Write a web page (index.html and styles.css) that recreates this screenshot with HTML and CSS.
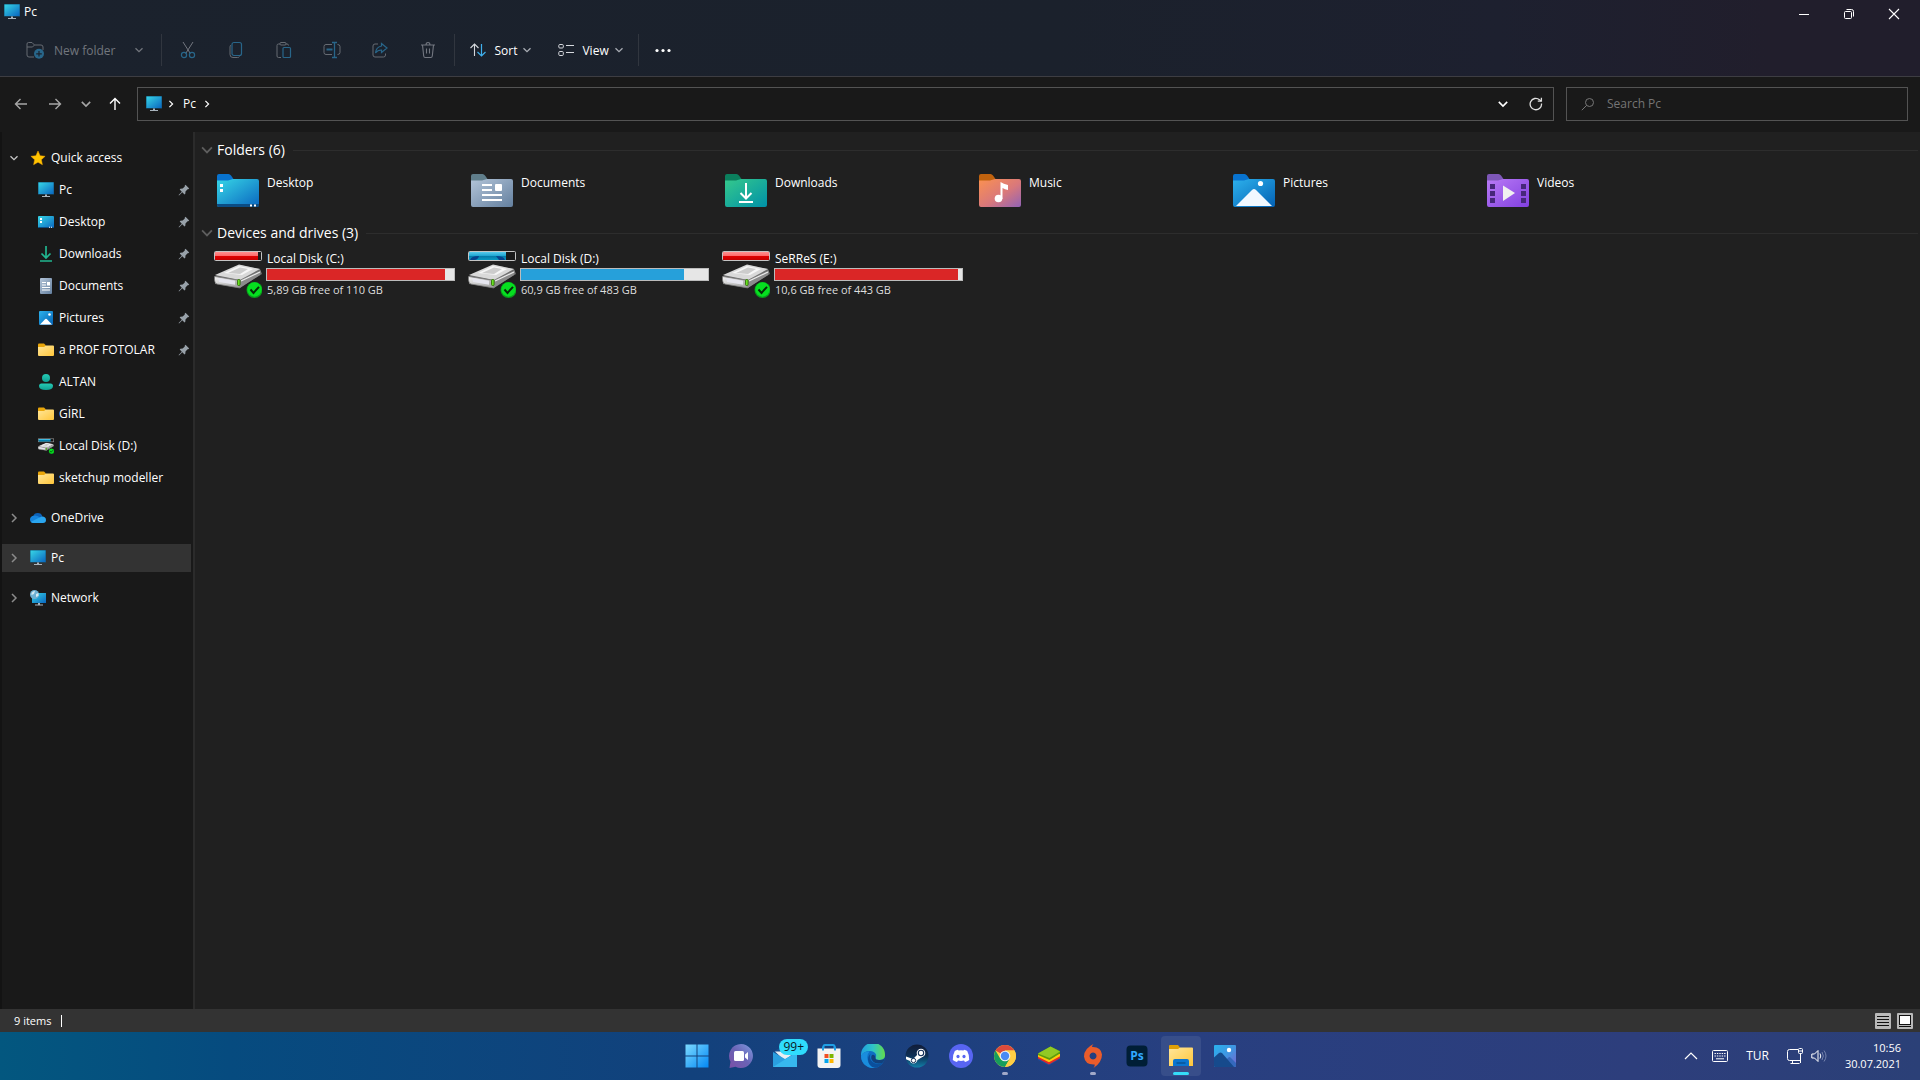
FILE: index.html
```html
<!DOCTYPE html>
<html lang="en">
<head>
    <meta charset="UTF-8">
    <meta name="viewport" content="width=device-width, initial-scale=1.0">
    <title>Pc</title>
    <link rel="stylesheet" href="styles.css">
</head>
<body>

    <!-- shared icons -->
    <svg class="sprite" aria-hidden="true">
        <defs>
            <linearGradient id="gScreen" x1="0" y1="0" x2="1" y2="1"><stop offset="0" stop-color="#37d6e6"/><stop offset="1" stop-color="#0a66c0"/></linearGradient>
            <linearGradient id="gFolder" x1="0" y1="0" x2="1" y2="1"><stop offset="0" stop-color="#ffe69a"/><stop offset="1" stop-color="#ffc63a"/></linearGradient>
            <linearGradient id="gDoc" x1="0" y1="0" x2="1" y2="1"><stop offset="0" stop-color="#b3c4d8"/><stop offset="1" stop-color="#64809f"/></linearGradient>
            <linearGradient id="gDown" x1="0" y1="0" x2="1" y2="1"><stop offset="0" stop-color="#35c98c"/><stop offset="1" stop-color="#0091a8"/></linearGradient>
            <linearGradient id="gMusic" x1="0" y1="0" x2="1" y2="1"><stop offset="0" stop-color="#fb9150"/><stop offset=".55" stop-color="#d9787b"/><stop offset="1" stop-color="#9162b6"/></linearGradient>
            <linearGradient id="gPic" x1="0" y1="0" x2="1" y2="1"><stop offset="0" stop-color="#2db1ec"/><stop offset="1" stop-color="#0361b4"/></linearGradient>
            <linearGradient id="gVid" x1="0" y1="0" x2="1" y2="1"><stop offset="0" stop-color="#b87af5"/><stop offset="1" stop-color="#8240e0"/></linearGradient>
            <linearGradient id="gUser" x1="0" y1="0" x2="0" y2="1"><stop offset="0" stop-color="#25cbb5"/><stop offset="1" stop-color="#109f92"/></linearGradient>
            <linearGradient id="gRed" x1="0" y1="0" x2="0" y2="1"><stop offset="0" stop-color="#ff8f8f"/><stop offset=".48" stop-color="#ff6a6a"/><stop offset=".5" stop-color="#e00000"/><stop offset="1" stop-color="#c40000"/></linearGradient>
            <linearGradient id="gCyan" x1="0" y1="0" x2="0" y2="1"><stop offset="0" stop-color="#58cbec"/><stop offset=".48" stop-color="#1fa5d2"/><stop offset=".5" stop-color="#0478a6"/><stop offset="1" stop-color="#0a9ac4"/></linearGradient>
            <linearGradient id="gMetal" x1="0" y1="0" x2="1" y2="1"><stop offset="0" stop-color="#f4f4f4"/><stop offset="1" stop-color="#9a9a9a"/></linearGradient>
            <linearGradient id="gWin" gradientUnits="userSpaceOnUse" x1="0" y1="0" x2="24" y2="24"><stop offset="0" stop-color="#7fdcff"/><stop offset="1" stop-color="#0086f4"/></linearGradient>
            <linearGradient id="gChat" x1="1" y1="0" x2="0" y2="1"><stop offset="0" stop-color="#7f9be0"/><stop offset=".5" stop-color="#6a63b5"/><stop offset="1" stop-color="#7c4fa6"/></linearGradient>
            <linearGradient id="gEdge" x1="0" y1="0" x2="1" y2="0"><stop offset="0" stop-color="#1f9fe0"/><stop offset=".5" stop-color="#2fc4c8"/><stop offset="1" stop-color="#62dc4b"/></linearGradient>
            <linearGradient id="gSteam" x1="0" y1="0" x2="0" y2="1"><stop offset="0" stop-color="#111c38"/><stop offset=".5" stop-color="#0d2f55"/><stop offset="1" stop-color="#127fa8"/></linearGradient>
            <linearGradient id="gPhoto" x1="0" y1="0" x2="1" y2="1"><stop offset="0" stop-color="#29b2ee"/><stop offset=".5" stop-color="#3f96e2"/><stop offset="1" stop-color="#7a63cf"/></linearGradient>
        </defs>

        <symbol id="pc" viewBox="0 0 16 16">
            <rect y="0" width="16" height="12.500" rx=".6" fill="#15577c"/>
            <rect x=".5" y=".5" width="15" height="11.500" fill="url(#gScreen)"/>
            <path d="M7 12.500h2v1.500h3v1H4v-1h3z" fill="#a9b4bd"/>
        </symbol>
        <symbol id="chev-down" viewBox="0 0 10 10"><path d="M1.500 3.200 5 6.700l3.500-3.500" fill="none" stroke="currentColor" stroke-width="1.300"/></symbol>
        <symbol id="chev-right" viewBox="0 0 10 10"><path d="M3 1l4 4-4 4" fill="none" stroke="currentColor" stroke-width="1.500"/></symbol>
        <symbol id="pin" viewBox="0 0 12 12"><path d="M7.500.8 11.200 4.500 10.200 5.300 9.600 5.200 7.500 7.400 7.300 9.700 6.500 10.400 4.300 8.200 1 11.400.6 11 3.800 7.700 1.700 5.600 2.400 4.800 4.700 4.600 6.800 2.500 6.700 1.700z" fill="#98a1a9"/></symbol>
        <symbol id="folder" viewBox="0 0 16 16">
            <path d="M0 2.500Q0 1.500 1 1.500H6L8 3.500V6H0z" fill="#e9a60a"/>
            <path d="M0 5h6l2-1.500h7q1 0 1 1V13q0 1-1 1H1q-1 0-1-1z" fill="url(#gFolder)"/>
        </symbol>
        <symbol id="star" viewBox="0 0 16 16"><path d="M8 1l2.100 4.700 5 .6-3.700 3.400 1 5L8 12.200 3.600 14.700l1-5L.9 6.300l5-.6z" fill="#ffc400" stroke="#f5a300" stroke-width=".5"/></symbol>

        <symbol id="drive" viewBox="0 0 48 34">
            <path d="M1 12 26 1 46 5 48 10 25 24 1 20z" fill="#6d6d6d"/>
            <path d="M1 11 25 .5 46 5 26 16z" fill="#d9d9d9"/>
            <path d="M10 9 25 2 39 5 28 11z" fill="#f6f6f6"/>
            <path d="M14 9 26 3.500 34 5 26 10z" fill="#cccccc"/>
            <path d="M.5 12.500 26 16.500V24L3 20Q.5 19 .5 16z" fill="url(#gMetal)" stroke="#777" stroke-width=".7"/>
            <path d="M26 16 47 6.500 46 11 26 24z" fill="#8b8b8b"/>
            <path d="M27 17 46 8" stroke="#ededed" stroke-width="1.200"/>
            <path d="M4 14l17 2.700v4L5 18z" fill="#e5e5ee"/>
            <rect x="23.500" y="15.500" width="2.600" height="6" rx="1" fill="#68e022" stroke="#286400" stroke-width=".8"/>
            <circle cx="40.500" cy="26" r="8" fill="#0a9a1c"/>
            <circle cx="40.500" cy="25.500" r="7.200" fill="#06df20"/>
            <path d="M36.500 25.500l3 3.400 5.500-6" fill="none" stroke="#052b08" stroke-width="2"/>
        </symbol>

        <!-- folder body shared by the six library folders -->
        <symbol id="fbody" viewBox="0 0 42 34">
            <path d="M0 6.500h11L16 5h24q2 0 2 2v24q0 2-2 2H2q-2 0-2-2z"/>
        </symbol>
    </svg>

    <div class="window">
        <header class="top">
            <div class="titlebar">
                <svg class="i16"><use href="#pc"/></svg>
                <span class="title">Pc</span>
                <div class="window-buttons">
                    <button type="button" aria-label="Minimize"><svg class="i12" viewBox="0 0 12 12"><path d="M1 6.500h10" stroke="#fff"/></svg></button>
                    <button type="button" aria-label="Restore"><svg class="i12" viewBox="0 0 12 12" fill="none" stroke="#fff"><rect x="1.500" y="3.500" width="7" height="7" rx="1"/><path d="M3.500 1.500H8.500q2 0 2 2V8.500"/></svg></button>
                    <button type="button" aria-label="Close"><svg class="i12" viewBox="0 0 12 12"><path d="M1 1l10 10M11 1 1 11" stroke="#fff" stroke-width="1.100"/></svg></button>
                </div>
            </div>

            <div class="toolbar">
                <button type="button" class="new-folder" disabled>
                    <svg class="i18" viewBox="0 0 18 18" fill="none"><path d="M8 16H3q-2 0-2-2V3q0-1.500 1.500-1.500H6L8.500 4H15q2 0 2 2v3M1 6h5.500l2-2" stroke="#666b73"/><circle cx="13" cy="12.800" r="5" fill="#28668a"/><path d="M13 10v5.600M10.200 12.800h5.600" stroke="#1b222d" stroke-width="1.200"/></svg>
                    <span>New folder</span>
                    <svg class="i10"><use href="#chev-down"/></svg>
                </button>
                <div class="group">
                    <button type="button" aria-label="Cut" disabled><svg class="i18" viewBox="0 0 18 18" fill="none"><path d="M4 1l7.300 11.500M14 1 6.700 12.500" stroke="#737780"/><circle cx="5" cy="14" r="2.600" stroke="#28668a" stroke-width="1.200"/><circle cx="13" cy="14" r="2.600" stroke="#28668a" stroke-width="1.200"/></svg></button>
                    <button type="button" aria-label="Copy" disabled><svg class="i18" viewBox="0 0 18 18" fill="none"><path d="M4 4q-1 .5-1 2v7.500q0 3 3 3h4.500q1.500 0 2-1" stroke="#666b73"/><rect x="5" y="1.500" width="9.500" height="13" rx="2" stroke="#28668a" stroke-width="1.200"/></svg></button>
                    <button type="button" aria-label="Paste" disabled><svg class="i18" viewBox="0 0 18 18" fill="none"><path d="M5 3H3.500Q2 3 2 4.500V15q0 1.500 1.500 1.500H6M10.500 3H12q1.500 0 1.500 1.500" stroke="#666b73"/><rect x="5" y="1.500" width="6" height="2.500" rx="1" stroke="#666b73"/><rect x="8" y="6.500" width="7.500" height="10" rx="1" stroke="#28668a" stroke-width="1.200"/></svg></button>
                    <button type="button" aria-label="Rename" disabled><svg class="i18" viewBox="0 0 18 18" fill="none"><path d="M9 3.500H3q-2 0-2 2v6q0 2 2 2h6M14.500 3.500q2.500 0 2.500 2v6q0 2-2.500 2" stroke="#666b73"/><path d="M3.500 8.500h6" stroke="#28668a" stroke-width="2"/><path d="M11.500 1.500v15M9 1.500h5M9 16.500h5" stroke="#28668a" stroke-width="1.300"/></svg></button>
                    <button type="button" aria-label="Share" disabled><svg class="i18" viewBox="0 0 18 18" fill="none"><path d="M7 3H4Q2 3 2 5v9q0 2 2 2h8.500q2 0 2-2v-1.500" stroke="#666b73"/><path d="M10.500 2.500 16 7l-5.500 4.500V9Q6.500 9 4.500 12 5 6 10.500 5z" stroke="#28668a" stroke-width="1.200"/></svg></button>
                    <button type="button" aria-label="Delete" disabled><svg class="i18" viewBox="0 0 18 18" fill="none"><path d="M2 4h14M3.500 4l1.200 11q.2 1.500 1.500 1.500h5.600q1.300 0 1.500-1.500L14.500 4M7 4q0-2.500 2-2.500T11 4M7.500 7.500v5M10.500 7.500v5" stroke="#737780" stroke-width="1.100"/></svg></button>
                </div>
                <div class="group menus">
                    <button type="button">
                        <svg class="i16" viewBox="0 0 16 16" fill="none"><path d="M4.500 14V2M.5 6l4-4 4 4" stroke="#d5d8dd" stroke-width="1.100"/><path d="M11.500 2v12M7.500 10l4 4 4-4" stroke="#3fb1ee" stroke-width="1.200"/></svg>
                        <span>Sort</span>
                        <svg class="i10"><use href="#chev-down"/></svg>
                    </button>
                    <button type="button">
                        <svg class="i16" viewBox="0 0 16 16" fill="none" stroke="#d5d8dd"><rect x=".8" y="2.500" width="4.500" height="3.500" rx="1"/><rect x=".8" y="9.500" width="4.500" height="4" rx="1"/><path d="M8 3.500h8M8 10.500h8"/></svg>
                        <span>View</span>
                        <svg class="i10"><use href="#chev-down"/></svg>
                    </button>
                </div>
                <button type="button" class="more" aria-label="See more"><svg class="i16" viewBox="0 0 16 16" fill="#fff"><circle cx="2" cy="8.500" r="1.600"/><circle cx="8" cy="8.500" r="1.600"/><circle cx="14" cy="8.500" r="1.600"/></svg></button>
            </div>
        </header>

        <div class="navbar">
            <div class="history">
                <button type="button" aria-label="Back"><svg class="i14" viewBox="0 0 14 14"><path d="M13 7H2M6.500 2 1.500 7l5 5" fill="none" stroke="#a6a6a6" stroke-width="1.400"/></svg></button>
                <button type="button" aria-label="Forward"><svg class="i14" viewBox="0 0 14 14"><path d="M1 7h11M7.500 2l5 5-5 5" fill="none" stroke="#a6a6a6" stroke-width="1.400"/></svg></button>
                <button type="button" class="recent" aria-label="Recent locations"><svg class="i12"><use href="#chev-down"/></svg></button>
                <button type="button" aria-label="Up"><svg class="i14" viewBox="0 0 14 14"><path d="M7 13V2M2 6.500l5-5 5 5" fill="none" stroke="#fff" stroke-width="1.400"/></svg></button>
            </div>
            <div class="address">
                <svg class="i16"><use href="#pc"/></svg>
                <svg class="i8"><use href="#chev-right"/></svg>
                <a href="#pc-root">Pc</a>
                <svg class="i8"><use href="#chev-right"/></svg>
                <button type="button" class="previous" aria-label="Previous locations"><svg class="i12"><use href="#chev-down"/></svg></button>
                <button type="button" aria-label="Refresh"><svg class="i14" viewBox="0 0 14 14" fill="none" stroke="#e0e0e0" stroke-width="1.300"><path d="M12.500 6.500A5.700 5.700 0 1 1 10.500 2.700L12.200 4"/><path d="M12.400.8V4.200H8.800"/></svg></button>
            </div>
            <label class="search">
                <svg class="i14" viewBox="0 0 14 14" fill="none" stroke="#777"><circle cx="8.500" cy="5.500" r="4"/><path d="M5.600 8.400.8 13.200"/></svg>
                <input type="text" placeholder="Search Pc" aria-label="Search Pc">
            </label>
        </div>

        <div class="main">
            <nav class="sidebar">
                <a href="#quick" class="root open"><svg class="i10"><use href="#chev-down"/></svg><svg class="i16"><use href="#star"/></svg>Quick access</a>
                <a href="#pc-root" class="child"><svg class="i16"><use href="#pc"/></svg>Pc<svg class="pin"><use href="#pin"/></svg></a>
                <a href="#desktop" class="child"><svg class="i16" viewBox="0 0 16 16"><rect y="2" width="16" height="12" rx="1" fill="url(#gScreen)"/><path d="M2 4h2v2H2zM2 7h2v2H2z" fill="#fff"/><path d="M0 13h16q0 1-1 1H1q-1 0-1-1z" fill="#0b4f86"/><path d="M11 12.800h1v1h-1zM13 12.800h1v1h-1z" fill="#fff"/></svg>Desktop<svg class="pin"><use href="#pin"/></svg></a>
                <a href="#downloads" class="child"><svg class="i16" viewBox="0 0 16 16"><path d="M8 0v11.500M3.500 7.500 8 12l4.500-4.500M2 15h12" fill="none" stroke="#21b58f" stroke-width="1.700"/></svg>Downloads<svg class="pin"><use href="#pin"/></svg></a>
                <a href="#documents" class="child"><svg class="i16" viewBox="0 0 16 16"><rect x="2" width="12" height="16" rx="1" fill="url(#gDoc)"/><path d="M4 4.500h4M4 7h4M4 9.500h8M4 12h8" stroke="#fff" stroke-width="1.100"/><path d="M9 4h3v3.500H9z" fill="#fff"/></svg>Documents<svg class="pin"><use href="#pin"/></svg></a>
                <a href="#pictures" class="child"><svg class="i16" viewBox="0 0 16 16"><rect x="1" y="1" width="14" height="14" rx="1" fill="url(#gPic)"/><path d="M2 14.500 7.300 9q.7-.7 1.400 0l5.300 5.500z" fill="#fff"/><circle cx="11.500" cy="4.500" r="1.300" fill="#fff"/></svg>Pictures<svg class="pin"><use href="#pin"/></svg></a>
                <a href="#prof" class="child"><svg class="i16"><use href="#folder"/></svg>a PROF FOTOLAR<svg class="pin"><use href="#pin"/></svg></a>
                <a href="#altan" class="child"><svg class="i16" viewBox="0 0 16 16" fill="url(#gUser)"><circle cx="8" cy="4" r="4"/><path d="M1 12q0-2.500 2.500-2.500h9Q15 9.500 15 12q0 4-7 4t-7-4z"/></svg>ALTAN</a>
                <a href="#girl" class="child"><svg class="i16"><use href="#folder"/></svg>GİRL</a>
                <a href="#disk-d" class="child"><svg class="i16" viewBox="0 0 16 16"><rect x=".3" y=".8" width="15.400" height="3" fill="#111" stroke="#999" stroke-width=".6"/><rect x=".6" y="1" width="12" height="2.500" fill="url(#gCyan)"/><svg y="4.500" width="16" height="11.500"><use href="#drive"/></svg></svg>Local Disk (D:)</a>
                <a href="#sketchup" class="child"><svg class="i16"><use href="#folder"/></svg>sketchup modeller</a>
                <a href="#onedrive" class="root"><svg class="i10"><use href="#chev-right"/></svg><svg class="i16" viewBox="0 0 16 16"><path d="M3 6.500A5 5 0 0 1 12.500 6.500L8 10z" fill="#0d62b8"/><path d="M4 5.700Q0 6 0 9.600 0 13 3.500 13L11 8.500Q7.500 5 4 5.700z" fill="#1684dc"/><path d="M12 6.500Q16 6.500 16 10q0 3-3 3H3.500Q1.500 13 1 11.800L9.500 7.500z" fill="#2aa5ee"/></svg>OneDrive</a>
                <a href="#pc-root" class="root selected"><svg class="i10"><use href="#chev-right"/></svg><svg class="i16"><use href="#pc"/></svg>Pc</a>
                <a href="#network" class="root"><svg class="i10"><use href="#chev-right"/></svg><svg class="i16" viewBox="0 0 16 16"><rect x="2" y="3" width="14" height="10" fill="url(#gScreen)"/><path d="M8 13h2v1.500h3v1H5v-1h3z" fill="#a9b4bd"/><circle cx="4.500" cy="4.500" r="4.500" fill="#6db0d3"/><path d="M1.500 3Q3 .8 5 1L4 4 1.500 5zM6 4l2.500-1v3L6 7z" fill="#d4e9f2"/></svg>Network</a>
            </nav>

            <main class="content" id="pc-root">
                <h2><svg class="i14"><use href="#chev-down"/></svg>Folders (6)</h2>
                <div class="tiles">
                    <a href="#desktop" class="tile">
                        <svg class="i48" viewBox="-3 -7 48 48"><path d="M0 2q0-2 2-2h9.500Q13 0 14 1.500L16.500 5V12H0z" fill="#0873cf"/><use href="#fbody" width="42" height="34" fill="url(#gScreen)"/><path d="M0 30h42v1q0 2-2 2H2q-2 0-2-2z" fill="#0b4c84"/><path d="M3 10h3v3H3zM3 15h3v3H3zM33 30.500h2v2h-2zM37 30.500h2v2h-2z" fill="#fff"/></svg>
                        <span class="name">Desktop</span>
                    </a>
                    <a href="#documents" class="tile">
                        <svg class="i48" viewBox="-3 -7 48 48"><path d="M0 2q0-2 2-2h9.500Q13 0 14 1.500L16.500 5V12H0z" fill="#607e8b"/><use href="#fbody" width="42" height="34" fill="url(#gDoc)"/><path d="M11 11h10M11 16h10M11 21h20M11 26h20" stroke="#fff" stroke-width="2"/><rect x="24" y="10" width="7" height="7" rx="1" fill="#fff"/></svg>
                        <span class="name">Documents</span>
                    </a>
                    <a href="#downloads" class="tile">
                        <svg class="i48" viewBox="-3 -7 48 48"><path d="M0 2q0-2 2-2h9.500Q13 0 14 1.500L16.500 5V12H0z" fill="#0b7f5d"/><use href="#fbody" width="42" height="34" fill="url(#gDown)"/><path d="M21 9v15M15.500 19l5.500 5.500 5.500-5.500M14 28h14" fill="none" stroke="#fff" stroke-width="2"/></svg>
                        <span class="name">Downloads</span>
                    </a>
                    <a href="#music" class="tile">
                        <svg class="i48" viewBox="-3 -7 48 48"><path d="M0 2q0-2 2-2h9.500Q13 0 14 1.500L16.500 5V12H0z" fill="#c0620e"/><use href="#fbody" width="42" height="34" fill="url(#gMusic)"/><circle cx="19.500" cy="24.500" r="3.800" fill="#fff"/><path d="M21.500 25V8q3 2 7.500 3v5q-3-.5-5.500-2v11z" fill="#fff"/></svg>
                        <span class="name">Music</span>
                    </a>
                    <a href="#pictures" class="tile">
                        <svg class="i48" viewBox="-3 -7 48 48"><path d="M0 2q0-2 2-2h9.500Q13 0 14 1.500L16.500 5V12H0z" fill="#0873cf"/><use href="#fbody" width="42" height="34" fill="url(#gPic)"/><path d="M3 32 19 16q2-2 4 0l16 16z" fill="#f1f8ff"/><circle cx="27.500" cy="9.500" r="2.600" fill="#fff"/></svg>
                        <span class="name">Pictures</span>
                    </a>
                    <a href="#videos" class="tile">
                        <svg class="i48" viewBox="-3 -7 48 48"><path d="M0 2q0-2 2-2h9.500Q13 0 14 1.500L16.500 5V12H0z" fill="#7e57b8"/><use href="#fbody" width="42" height="34" fill="url(#gVid)"/><path d="M3 10h5v5H3zM3 17h5v5H3zM3 24h5v5H3zM34 10h5v5h-5zM34 17h5v5h-5zM34 24h5v5h-5z" fill="#46277a"/><path d="M16 11.500 28 19 16 27z" fill="#f0f0f0"/></svg>
                        <span class="name">Videos</span>
                    </a>
                </div>

                <h2><svg class="i14"><use href="#chev-down"/></svg>Devices and drives (3)</h2>
                <div class="tiles">
                    <a href="#disk-c" class="tile drive">
                        <svg class="i48" viewBox="0 0 48 48"><rect x=".5" y="1.500" width="47" height="9" rx="1" fill="#1a1a1a" stroke="#c4c4c4"/><rect x="1" y="2" width="43" height="8" fill="url(#gRed)"/><svg y="14" width="48" height="34"><use href="#drive"/></svg></svg>
                        <span class="info">
                            <span class="label">Local Disk (C:)</span>
                            <span class="bar"><span class="used full" style="width: 95%"></span></span>
                            <span class="free">5,89 GB free of 110 GB</span>
                        </span>
                    </a>
                    <a href="#disk-d" class="tile drive">
                        <svg class="i48" viewBox="0 0 48 48"><rect x=".5" y="1.500" width="47" height="9" rx="1" fill="#1a1a1a" stroke="#c4c4c4"/><rect x="1" y="2" width="37" height="8" fill="url(#gCyan)"/><path d="M2 10q1-4 9-4-1 4-5 4zM28 6q8 0 9 4h-6z" fill="#06428c"/><svg y="14" width="48" height="34"><use href="#drive"/></svg></svg>
                        <span class="info">
                            <span class="label">Local Disk (D:)</span>
                            <span class="bar"><span class="used" style="width: 87%"></span></span>
                            <span class="free">60,9 GB free of 483 GB</span>
                        </span>
                    </a>
                    <a href="#disk-e" class="tile drive">
                        <svg class="i48" viewBox="0 0 48 48"><rect x=".5" y="1.500" width="47" height="9" rx="1" fill="#1a1a1a" stroke="#c4c4c4"/><rect x="1" y="2" width="46" height="8" fill="url(#gRed)"/><svg y="14" width="48" height="34"><use href="#drive"/></svg></svg>
                        <span class="info">
                            <span class="label">SeRReS (E:)</span>
                            <span class="bar"><span class="used full" style="width: 98%"></span></span>
                            <span class="free">10,6 GB free of 443 GB</span>
                        </span>
                    </a>
                </div>
            </main>
        </div>

        <footer class="statusbar">
            <span class="count">9 items</span>
            <div class="views">
                <button type="button" aria-label="Details"><svg class="i16" viewBox="0 0 16 16"><rect width="16" height="16" rx="1" fill="#b9b9b9"/><path d="M2 3.500h12M2 6.500h12M2 9.500h12M2 12.500h12" stroke="#111"/></svg></button>
                <button type="button" aria-label="Large icons"><svg class="i16" viewBox="0 0 16 16"><rect width="16" height="16" rx="1" fill="#b9b9b9"/><rect x="2.500" y="2.500" width="11" height="9" fill="#fff" stroke="#111"/><path d="M2 13.500h12" stroke="#111"/></svg></button>
            </div>
        </footer>
    </div>

    <div class="taskbar">
        <div class="apps">
            <button type="button" aria-label="Start"><svg class="i24" viewBox="0 0 24 24" fill="url(#gWin)"><path d="M.5.5h11v11H.5zM12.500.5h11v11h-11zM.5 12.500h11v11H.5zM12.500 12.500h11v11h-11z"/></svg></button>
            <button type="button" aria-label="Chat"><svg class="i24" viewBox="0 0 24 24"><path d="M12 0a12 12 0 1 1-5.500 22.700L.5 24l1-6.200A12 12 0 0 1 12 0z" fill="url(#gChat)"/><rect x="5" y="7" width="10" height="10" rx="1.500" fill="#fff"/><path d="M16 10.500 19 8v8l-3-2.500z" fill="#fff"/></svg></button>
            <button type="button" aria-label="Mail"><svg class="i24" viewBox="0 0 24 24"><path d="M0 8 8 3l16 5v8H0z" fill="#174f91"/><path d="M2 7.500h20L12 17z" fill="#e9eef3"/><path d="M0 8l12 7 12-7v15H0z" fill="#2a9fe0"/><path d="M0 23 24 8v15z" fill="#37b8ee"/></svg><span class="badge">99+</span></button>
            <button type="button" aria-label="Store"><svg class="i24" viewBox="0 0 24 24"><path d="M6.500 6V2.500q0-1.500 1.500-1.500h8q1.500 0 1.500 1.500V6" fill="none" stroke="#20a0e6" stroke-width="2"/><path d="M.5 4.500h23V21q0 3-3 3h-17q-3 0-3-3z" fill="#f3f3f3"/><path d="M6 2.500v4M18 2.500v4" stroke="#20a0e6" stroke-width="2"/><path d="M7.500 10h4v4h-4z" fill="#f04e23"/><path d="M12.500 10h4v4h-4z" fill="#7db500"/><path d="M7.500 15h4v4h-4z" fill="#05a5ec"/><path d="M12.500 15h4v4h-4z" fill="#ffb600"/></svg></button>
            <button type="button" aria-label="Edge"><svg class="i24" viewBox="0 0 24 24"><circle cx="12" cy="12" r="12" fill="#0f6fc4"/><path d="M0 11A12 12 0 0 1 24 10.500Q24.500 16 18 16q-4 0-3.500-2.500 1-1 .5-3Q13.500 7 9 7 2.500 7 0 12z" fill="url(#gEdge)"/><path d="M0 12Q2.500 7 8.500 7.500 4.500 12 7.500 18q2.500 5 7 5.700A12 12 0 0 1 0 12z" fill="#1a8ddd"/><path d="M9.500 10q-2 4.500 2 8 4.500 3.500 10.500.5-3.500 5-8 5.300-6.500-1-7-8Q7 11.500 9.500 10z" fill="#0b4f9c"/><path d="M14.500 13.500Q14 16 18 16q4.500.5 6-2.500-.5 3.500-2.300 5.300Q15 20.500 12 17.500q-3-3.500-1-6.500 3-1 3.500 2.500z" fill="#12417c"/></svg></button>
            <button type="button" aria-label="Steam"><svg class="i24" viewBox="0 0 24 24"><circle cx="12" cy="12" r="11.500" fill="url(#gSteam)"/><path d="M1 12.500 8 15l5-5 5 2.500-5.500 3.500Q11 20 8 19.500 5.500 19 5 17L1 15.200z" fill="#fff"/><circle cx="16" cy="9" r="4.300" fill="#fff"/><circle cx="16" cy="9" r="2.700" fill="#fff" stroke="#143058" stroke-width="1.100"/><circle cx="8.500" cy="16.500" r="2.200" fill="none" stroke="#143058"/></svg></button>
            <button type="button" aria-label="Discord"><svg class="i24" viewBox="0 0 24 24"><circle cx="12" cy="12" r="12" fill="#5865f2"/><path d="M9.500 6.500 9 5.800Q7 6.200 5.800 7 3.500 11 3.800 16q2 1.700 4.200 2l1-1.500q3 .8 6 0l1 1.500q2.200-.3 4.200-2 .3-5-2-9Q17 6.200 15 5.800l-.5.700q-2.500-.4-5 0z" fill="#fff"/><ellipse cx="9" cy="12.500" rx="1.600" ry="1.800" fill="#5865f2"/><ellipse cx="15" cy="12.500" rx="1.600" ry="1.800" fill="#5865f2"/></svg></button>
            <button type="button" class="running" aria-label="Chrome"><svg class="i24" viewBox="0 0 24 24"><circle cx="12" cy="12" r="11" fill="#ffce44"/><path d="M12 12 2.500 6.500A11 11 0 0 1 21.500 6.500H12z" fill="#db4a3c"/><path d="M2.500 6.500 7.300 14.700 12 12 16.700 14.800 12 23A11 11 0 0 1 2.500 6.500z" fill="#179d5b"/><path d="M21.500 6.500H12l4.800 8.200L12 23A11 11 0 0 0 21.500 6.500z" fill="#ffce44"/><circle cx="12" cy="12" r="5.300" fill="#f2f2f2"/><circle cx="12" cy="12" r="4.200" fill="#4a8af4"/></svg></button>
            <button type="button" aria-label="BlueStacks"><svg class="i24" viewBox="0 0 24 24"><path d="M1 14.500 12 9l11 5v1L12 21.500 1 16z" fill="#1b4d9e"/><path d="M1 12.500 12 8l11 4v2.200l-11 6.300L1 14.500z" fill="#e02a2a"/><path d="M1 10.500 12 6l11 4v2.200l-11 6-11-5.500z" fill="#ffcb0a"/><path d="M1 9.500 13.500 2.500 23 7v2.500L12.500 16 1 11z" fill="#5c9d0c"/><path d="M1 9.500 13.500 2.500 23 7.500 12.500 14z" fill="#92c924"/></svg></button>
            <button type="button" class="running" aria-label="Origin"><svg class="i24" viewBox="0 0 24 24"><path d="M12.500 0q-1.500 1.500-1.500 3Q20 2.500 21 10.500q0 8-8.500 13.500 1.500-2 1.200-3.500Q4 21 3 12.500 3 4.500 12.500 0zM12 8.500a3.500 3.500 0 1 0 .1 0z" fill="#ea5c2b" fill-rule="evenodd"/></svg></button>
            <button type="button" aria-label="Photoshop"><svg class="i24" viewBox="0 0 24 24"><rect x="1.500" y="1.500" width="21" height="21" rx="4" fill="#001e36"/><text x="12" y="16" class="ps">Ps</text></svg></button>
            <button type="button" class="running active" aria-label="File Explorer"><svg class="i24" viewBox="0 0 24 24"><path d="M0 2q0-1 1-1h8l2 2.500V6H0z" fill="#e0a008"/><path d="M0 5h9l2-1.500h12q1 0 1 1V22H0z" fill="url(#gFolder)"/><path d="M4 22v-5q0-2 2-2h12q2 0 2 2v5z" fill="#0b75cf"/><path d="M7.500 19h9" stroke="#0a5494" stroke-width="1.500"/></svg></button>
            <button type="button" aria-label="Photos"><svg class="i24" viewBox="0 0 24 24"><rect x="1" y="1" width="22" height="22" rx="1" fill="url(#gPhoto)"/><path d="M13 16l2.500-2.500q1-1 2 0L23 19v3q0 1-1 1h-9z" fill="#3569bd"/><path d="M1 13.500 6 9q1.500-1 3 0l12 14H2q-1 0-1-1z" fill="#164a8c"/><circle cx="16" cy="6" r="2.200" fill="#fff"/></svg></button>
        </div>
        <div class="tray">
            <button type="button" class="overflow" aria-label="Hidden icons"><svg class="i14" viewBox="0 0 14 14"><path d="M1 10l6-6 6 6" fill="none" stroke="#fff" stroke-width="1.200"/></svg></button>
            <button type="button" aria-label="Touch keyboard"><svg class="i16" viewBox="0 0 16 16" fill="none" stroke="#fff"><rect x=".5" y="2.500" width="15" height="11" rx="1"/><path d="M2.500 5.500h11M2.500 8h11" stroke-dasharray="1.400 1"/><path d="M4 10.800h8"/></svg></button>
            <button type="button" class="lang">TUR</button>
            <button type="button" class="system" aria-label="Network and volume">
                <svg class="i16" viewBox="0 0 16 16" fill="none" stroke="#fff"><path d="M11 1.500H2.500Q.5 1.500.5 3.500v7q0 2 2 2H13M5.500 12.500V15M3.500 15.500h9M13.500 6v9"/><rect x="11.500" y=".5" width="4" height="5" rx="1"/><path d="M11.500 3h4"/></svg>
                <svg class="i16" viewBox="0 0 16 16" fill="none" stroke="#fff"><path d="M.8 6v4h2.700L7 13.500v-11L3.500 6z"/><path d="M9 5.500q1.500 2.500 0 5"/><path d="M11 4q2.700 4 0 8M13 2.500q4 5.500 0 11" stroke="#7482ad"/></svg>
            </button>
            <button type="button" class="clock"><span>10:56</span><span>30.07.2021</span></button>
        </div>
    </div>

</body>
</html>
```
FILE: styles.css
```css
* {
    box-sizing: border-box;
}

body {
    margin: 0;
    height: 100vh;
    display: flex;
    flex-direction: column;
    font-family: "Open Sans", "Noto Sans", sans-serif;
    font-size: 12px;
    line-height: 16px;
    color: #fff;
    background: #202020;
    overflow: hidden;
}

button {
    display: flex;
    align-items: center;
    justify-content: center;
    margin: 0;
    padding: 0;
    border: none;
    background: none;
    color: inherit;
    font: inherit;
}

a {
    color: inherit;
    text-decoration: none;
}

svg {
    flex: none;
    display: block;
}

.sprite {
    position: absolute;
    width: 0;
    height: 0;
}

.i8 { width: 8px; height: 8px; }
.i10 { width: 10px; height: 10px; }
.i12 { width: 12px; height: 12px; }
.i14 { width: 14px; height: 14px; }
.i16 { width: 16px; height: 16px; }
.i18 { width: 18px; height: 18px; }
.i24 { width: 24px; height: 24px; }
.i48 { width: 48px; height: 48px; }

.window {
    flex: 1;
    min-height: 0;
    display: flex;
    flex-direction: column;
}

/* title bar and command bar */
.top {
    background: linear-gradient(90deg, #1b222d, #1b212c 55%, #1d202f 78%, #211e2c 92%);
    border-bottom: 1px solid #3d3d42;
}

.titlebar {
    display: flex;
    height: 28px;
    padding: 4px 4px 0 4px;
    gap: 4px;
}

.window-buttons {
    display: flex;
    margin-left: auto;
}

.window-buttons button {
    width: 45px;
    height: 20px;
}

.toolbar {
    display: flex;
    align-items: center;
    height: 48px;
    padding: 6px 0 10px 26px;
    font-weight: 500;
}

.toolbar span {
    padding-top: 2px;
}

.new-folder {
    gap: 10px;
    padding-right: 17px;
}

.new-folder .i10 {
    margin-left: 9px;
}

.toolbar button:disabled {
    color: #72767d;
}

.group {
    display: flex;
    align-items: center;
    height: 32px;
    padding: 0 2px;
    border-left: 1px solid #31363f;
}

.group button {
    width: 48px;
}

.menus {
    gap: 26px;
    padding: 0 14px 0 15px;
    border-right: 1px solid #31363f;
}

.menus button {
    width: auto;
    gap: 8px;
}

.menus .i10 {
    margin-left: -3px;
    color: #a9adb4;
}

.more {
    margin-left: 16px;
}

/* address row */
.navbar {
    display: flex;
    padding: 10px 12px 11px;
    background: #191919;
}

.history {
    display: flex;
    align-items: center;
    gap: 20px;
    width: 125px;
    padding-left: 2px;
}

.recent {
    margin: 0 -4px 0 -2px;
    color: #a6a6a6;
}

.address {
    flex: 1;
    display: flex;
    align-items: center;
    height: 34px;
    padding: 0 10px 0 8px;
    border: 1px solid #535353;
}

.address .i8 {
    margin: 0 5px;
}

.address a {
    padding: 0 2px 0 3px;
}

.previous {
    margin: 0 20px 0 auto;
}

.search {
    display: flex;
    align-items: center;
    gap: 12px;
    width: 342px;
    margin-left: 12px;
    padding: 0 14px;
    border: 1px solid #535353;
}

.search input {
    flex: 1;
    min-width: 0;
    padding: 0;
    border: none;
    outline: none;
    background: none;
    color: #fff;
    font: inherit;
}

.search input::placeholder {
    color: #757575;
    opacity: 1;
}

.main {
    flex: 1;
    min-height: 0;
    display: flex;
}

/* navigation pane */
.sidebar {
    width: 195px;
    padding: 10px 2px 0 0;
    background: #191919;
    border-left: 2px solid #131313;
    border-right: 2px solid #2b2b2b;
}

.sidebar a {
    display: flex;
    align-items: center;
    height: 28px;
    margin-bottom: 4px;
}

.sidebar .child {
    padding: 0 1px 0 36px;
    gap: 5px;
}

.sidebar .root {
    margin: 12px 0;
    padding-left: 7px;
    gap: 5px;
}

.sidebar .root .i10 {
    margin-right: 6px;
    color: #8b8b8b;
}

.sidebar .open {
    margin: 2px 0 4px;
}

.sidebar .open .i10 {
    color: #c8c8c8;
}

.sidebar .selected {
    background: #333;
}

.pin {
    width: 12px;
    height: 12px;
    margin-left: auto;
}

/* file list */
.content {
    flex: 1;
    padding: 6px 2px 0 5px;
}

h2 {
    display: flex;
    align-items: center;
    height: 24px;
    margin: 0;
    font-size: 14px;
    font-weight: 400;
}

h2 svg {
    margin-right: 3px;
    color: #5e5e5e;
}

h2::after {
    content: "";
    flex: 1;
    height: 1px;
    margin-left: 8px;
    background: #2d2d2d;
}

.tiles {
    display: grid;
    grid-template-columns: repeat(auto-fill, 242px);
    column-gap: 12px;
    padding: 5px 0 6px 14px;
}

.tile {
    display: flex;
    gap: 5px;
}

.name {
    padding-top: 8px;
}

.drive {
    gap: 4px;
}

.info {
    display: flex;
    flex-direction: column;
    width: 189px;
    padding-top: 1px;
}

.label,
.free {
    padding-left: 1px;
}

.bar {
    height: 13px;
    margin: 1px 0;
    background: #e6e6e6;
    border: 1px solid #bcbcbc;
}

.used {
    display: block;
    height: 100%;
    background: #26a0da;
}

.full {
    background: #da2626;
}

.free {
    font-size: 11px;
    color: #dedede;
}

.statusbar {
    display: flex;
    align-items: center;
    justify-content: space-between;
    height: 23px;
    padding: 0 7px 0 14px;
    background: #333;
}

.count {
    padding-right: 10px;
    border-right: 1px solid #fff;
    font-size: 11px;
    line-height: 12px;
}

.views {
    display: flex;
    gap: 6px;
}

/* taskbar */
.taskbar {
    display: grid;
    grid-template-columns: 1fr auto 1fr;
    height: 48px;
    background: linear-gradient(90deg, #03577f, #064b7f 12%, #12417c 36%, #283f80 62%, #2d3e7c 85%, #2b4077);
}

.apps {
    grid-column: 2;
    display: flex;
    align-items: center;
    gap: 4px;
    padding-left: 2px;
}

.apps button {
    position: relative;
    width: 40px;
    height: 40px;
    border-radius: 4px;
}

.apps .active {
    background: rgba(255, 255, 255, 0.08);
}

.running::after {
    content: "";
    position: absolute;
    bottom: 1px;
    left: 50%;
    width: 6px;
    height: 3px;
    margin-left: -3px;
    border-radius: 2px;
    background: #a1a9c9;
}

.active::after {
    width: 16px;
    margin-left: -8px;
    background: #35dcf9;
}

.badge {
    position: absolute;
    top: 3px;
    right: -3px;
    padding: 0 4px;
    border-radius: 8px;
    background: #2fdcfc;
    color: #0a1a24;
}

.ps {
    font-size: 12px;
    font-weight: 700;
    fill: #31a8ff;
    text-anchor: middle;
}

.tray {
    display: flex;
    align-items: center;
    justify-content: flex-end;
    gap: 18px;
    padding-right: 19px;
}

.overflow {
    margin-right: -4px;
}

.system {
    gap: 8px;
}

.clock {
    flex-direction: column;
    align-items: flex-end;
    font-size: 11px;
}
```
